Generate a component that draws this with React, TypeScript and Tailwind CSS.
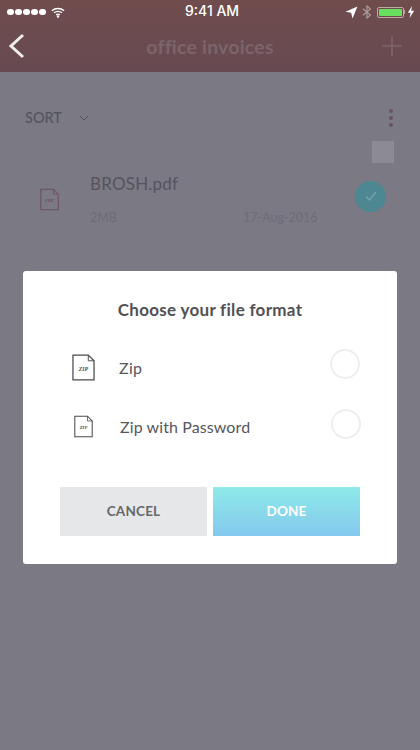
import { ChevronDown } from "lucide-react";

const FONT = "font-['Lato','Noto_Sans',sans-serif]";

function FileIcon({ label, w, h, color = "#4a4a4f" }: { label: string; w: number; h: number; color?: string }) {
  return (
    <svg width={w} height={h} viewBox="0 0 24 28" fill="none">
      <path d="M1 1H17L23 7V27H1Z" stroke={color} strokeWidth="1.3" />
      <path d="M17 1V7H23" stroke={color} strokeWidth="1" />
      <text x="12" y="17.5" textAnchor="middle" fontSize="6" fontWeight="700" fontFamily="'Liberation Serif', serif" fontStyle="italic" fill={color}>
        {label}
      </text>
    </svg>
  );
}

function StatusBar() {
  return (
    <div className="relative flex h-[24px] items-center justify-between pl-[7px] pr-[5px] text-white">
      <div className="flex items-center gap-[1.5px]">
        {[0, 1, 2, 3, 4].map((i) => (
          <span key={i} className="h-[6.5px] w-[6.5px] rounded-full bg-white" />
        ))}
        <svg width="14" height="11" viewBox="0 0 16 12" fill="none" stroke="white" strokeWidth="1.5" className="ml-[3.5px]">
          <path d="M1 4C5 0.6 11 0.6 15 4" />
          <path d="M3.4 6.4C6 4.3 10 4.3 12.6 6.4" />
          <path d="M5.8 8.7C7 7.8 9 7.8 10.2 8.7" />
          <circle cx="8" cy="10.6" r="0.7" fill="white" />
        </svg>
      </div>
      <span className="absolute left-[185px] top-[1px] font-['Inter',sans-serif] text-[14px] leading-[20px] font-medium">9:41 AM</span>
      <div className="flex items-center">
        <svg width="13" height="13" viewBox="0 0 11 11" fill="white">
          <path d="M10.5 0.5L0.5 4.8L5.2 5.8L6.4 10.5Z" />
        </svg>
        <svg width="10" height="14" viewBox="0 0 10 14" fill="none" stroke="#a89a9c" strokeWidth="1.2" className="ml-[4px]">
          <path d="M1 3.8L8.4 10L5 13V1L8.4 4L1 10.2" />
        </svg>
        <div className="ml-[5px] flex h-[11px] w-[27px] rounded-[2px] border border-[#b9ad9e] p-[1px]">
          <div className="flex-1 rounded-[1px] bg-[#66e05e]" />
        </div>
        <span className="h-[4px] w-[1.5px] bg-[#b9ad9e]" />
        <svg width="8" height="12" viewBox="0 0 8 12" fill="white" className="ml-[2px]">
          <path d="M5 0L0.8 6.8H3.6L2.6 12L7.2 4.8H4.2Z" />
        </svg>
      </div>
    </div>
  );
}

function FormatRow({ label, small }: { label: string; small?: boolean }) {
  return (
    <div className="flex h-[59px] items-center pl-[48px]">
      <div className="flex w-[24px] justify-center">
        {small ? <FileIcon label="ZIP" w={19} h={23} /> : <FileIcon label="ZIP" w={23} h={27} />}
      </div>
      <span className={`text-[16px] text-[#56565b] ${small ? "ml-[25px] tracking-[0.1px]" : "ml-[24px] tracking-[0.3px]"}`}>{label}</span>
      <span className={`ml-auto h-[30px] w-[30px] rounded-full border-2 border-[#eeeeee] ${small ? "mb-[6px] mr-[36px]" : "mb-[8px] mr-[37px]"}`} />
    </div>
  );
}

export default function App() {
  return (
    <div className={`relative h-[750px] w-[420px] overflow-hidden bg-[#7b7984] ${FONT}`}>
      {/* Dimmed page behind the dialog */}
      <header className="h-[72px] bg-gradient-to-b from-[#704c4d] to-[#664a51]">
        <StatusBar />
        <div className="relative flex h-[48px] items-center justify-center pb-[2px]">
          <svg width="18" height="26" viewBox="0 0 18 26" fill="none" stroke="#f4eeee" strokeWidth="3" className="absolute left-[8px] top-[9px]">
            <path d="M15 2L3 13L15 24" />
          </svg>
          <span className="text-[19.5px] font-bold tracking-[0.2px] text-[#7b656b]">office invoices</span>
          <svg width="20" height="20" viewBox="0 0 20 20" stroke="#7b656b" strokeWidth="1.6" className="absolute right-[18px] top-[12px]">
            <path d="M10 0V20M0 10H20" />
          </svg>
        </div>
      </header>

      <div className="flex items-center justify-between pl-[25px] pr-[27px] pt-[35px]">
        <div className="flex items-center gap-[14px] text-[#55545d]">
          <span className="text-[14.5px] font-medium">SORT</span>
          <ChevronDown size={16} strokeWidth={1.5} />
        </div>
        <div className="flex flex-col gap-[3px]">
          {[0, 1, 2].map((i) => (
            <span key={i} className="h-[4px] w-[4px] rounded-full bg-[#6b5260]" />
          ))}
        </div>
      </div>
      <div className="flex justify-end pr-[26px] pt-[12px]">
        <div className="h-[22px] w-[22px] bg-[#8c8a94]" />
      </div>
      <div className="flex pl-[40px] pr-[34px] pt-[10px]">
        <div className="pt-[15px]">
          <FileIcon label="PDF" w={19} h={23} color="#6b4f5c" />
        </div>
        <div className="ml-[31px] flex-1">
          <div className="text-[17px] leading-[22px] tracking-[0.2px] text-[#55545d]">BROSH.pdf</div>
          <div className="mt-[15px] flex text-[12.5px] leading-[16px] text-[#6e6c76]">
            <span className="w-[153px]">2MB</span>
            <span>17-Aug-2016</span>
          </div>
        </div>
        <div className="mt-[8px] flex h-[31px] w-[31px] items-center justify-center rounded-full bg-[#4c8792]">
          <svg width="14" height="12" viewBox="0 0 14 12" fill="none" stroke="#76a3ad" strokeWidth="1.4">
            <path d="M2 6.5L5.5 10L12 2" />
          </svg>
        </div>
      </div>

      {/* Dialog */}
      <div className="absolute left-[23px] top-[271px] h-[293px] w-[374px] rounded-[3px] bg-white">
        <h2 className="pt-[27px] text-center text-[17px] leading-[24px] font-bold tracking-[0.3px] text-[#505055]">Choose your file format</h2>
        <div className="pt-[16px]">
          <FormatRow label="Zip" />
          <FormatRow label="Zip with Password" small />
        </div>
        <div className="flex gap-[6px] px-[37px] pt-[31px]">
          <button className="h-[49px] w-[147px] bg-[#e6e7e8] text-[13.5px] font-bold tracking-[0.2px] text-[#67676c]">CANCEL</button>
          <button className="h-[49px] w-[147px] bg-gradient-to-b from-[#8eeae9] to-[#84c8ed] text-[13.5px] font-bold tracking-[0.2px] text-white">DONE</button>
        </div>
      </div>
    </div>
  );
}
